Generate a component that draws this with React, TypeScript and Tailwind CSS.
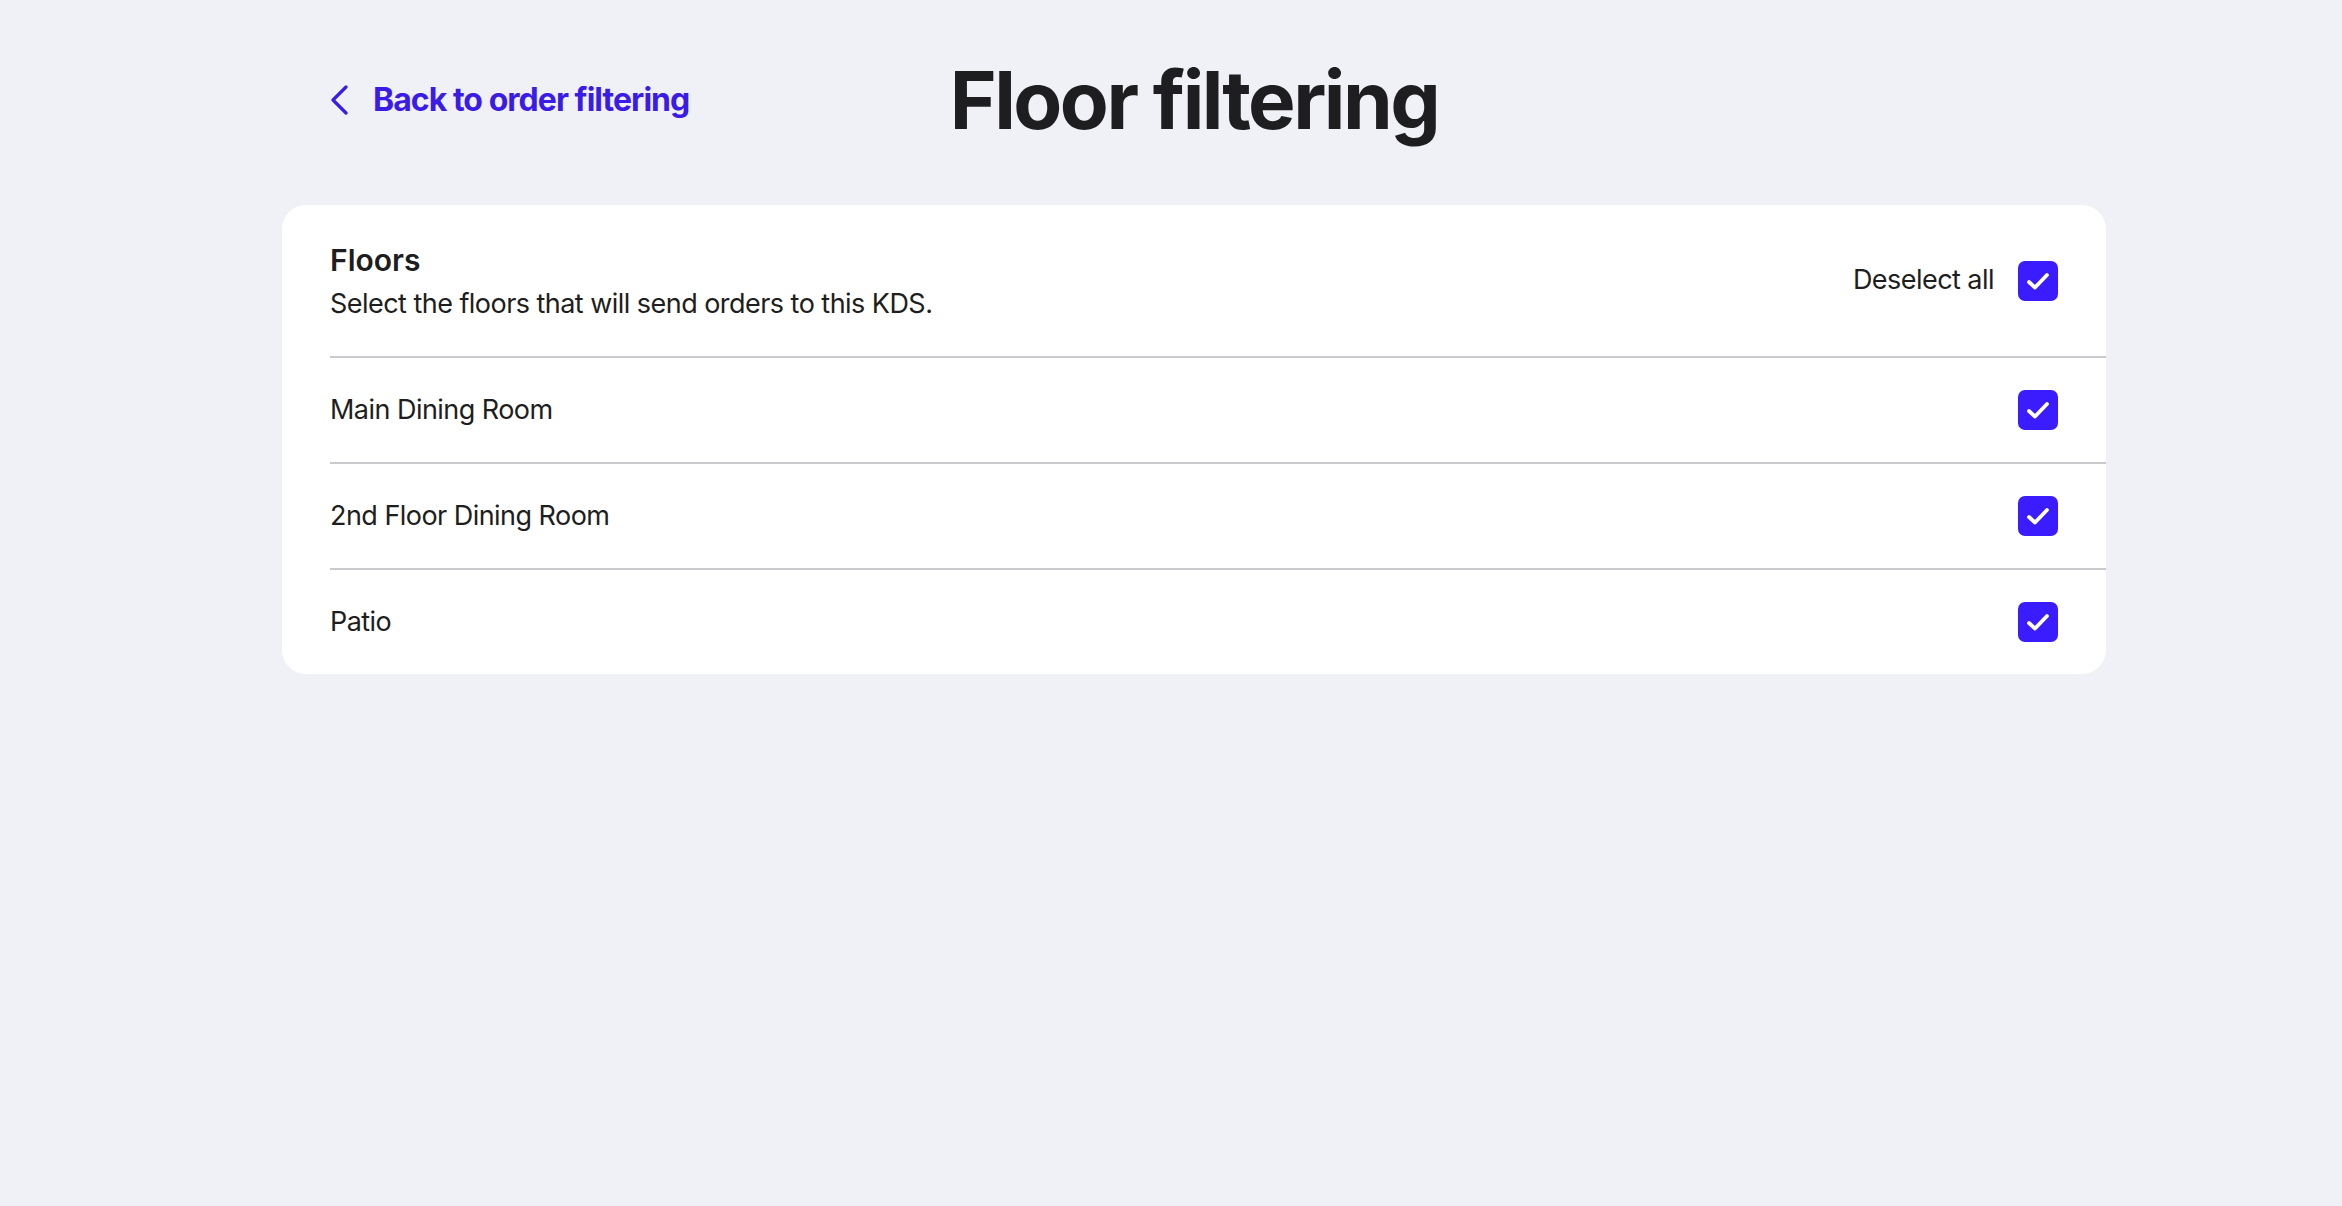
const floors = ["Main Dining Room", "2nd Floor Dining Room", "Patio"];

function CheckBox() {
  return (
    <span className="flex h-10 w-10 shrink-0 items-center justify-center rounded-[7px] bg-[#3b1cff]">
      <svg width="40" height="40" viewBox="0 0 40 40" fill="none">
        <path
          d="M11 21 L17 26.5 L29 14"
          stroke="white"
          strokeWidth="3.8"
          strokeLinecap="round"
          strokeLinejoin="round"
        />
      </svg>
    </span>
  );
}

export default function App() {
  return (
    <div className="min-h-[1206px] w-full bg-[#f0f1f6] font-['Inter','Liberation_Sans',sans-serif] text-[#1e1e20]">
      <div className="ml-[282px] w-[1824px] pt-[60px]">
        {/* header */}
        <div className="grid h-20 grid-cols-[1fr_auto_1fr] items-center">
          <a className="ml-12 flex items-center gap-[25px] text-[32px] font-bold tracking-[-0.03em] text-[#3a1ce6]">
            <svg width="18" height="30" viewBox="0 0 18 30" fill="none">
              <path
                d="M16 2 L3 15 L16 28"
                stroke="currentColor"
                strokeWidth="3.2"
                strokeLinecap="round"
                strokeLinejoin="round"
              />
            </svg>
            <span>Back to order filtering</span>
          </a>
          <h1 className="text-[80px] leading-none font-bold tracking-[-0.032em]">Floor filtering</h1>
          <div />
        </div>

        {/* card */}
        <div className="mt-[65px] overflow-hidden rounded-[24px] bg-white">
          <div className="ml-12 flex h-[153px] items-center justify-between border-b-2 border-[#c9c9ce] pr-12">
            <div className="flex flex-col gap-[6px]">
              <h2 className="text-[30px] leading-[40px] font-semibold">Floors</h2>
              <p className="text-[27px] leading-9 tracking-[-0.02em]">
                Select the floors that will send orders to this KDS.
              </p>
            </div>
            <div className="flex items-center gap-[24px]">
              <span className="text-[27px] tracking-[-0.02em]">Deselect all</span>
              <CheckBox />
            </div>
          </div>
          {floors.map((f, i) => (
            <div
              key={f}
              className={
                i < floors.length - 1
                  ? "ml-12 flex h-[106px] items-center justify-between border-b-2 border-[#c9c9ce] pr-12"
                  : "ml-12 flex h-[104px] items-center justify-between pr-12"
              }
            >
              <span className="text-[27px] tracking-[-0.02em]">{f}</span>
              <CheckBox />
            </div>
          ))}
        </div>
      </div>
    </div>
  );
}
